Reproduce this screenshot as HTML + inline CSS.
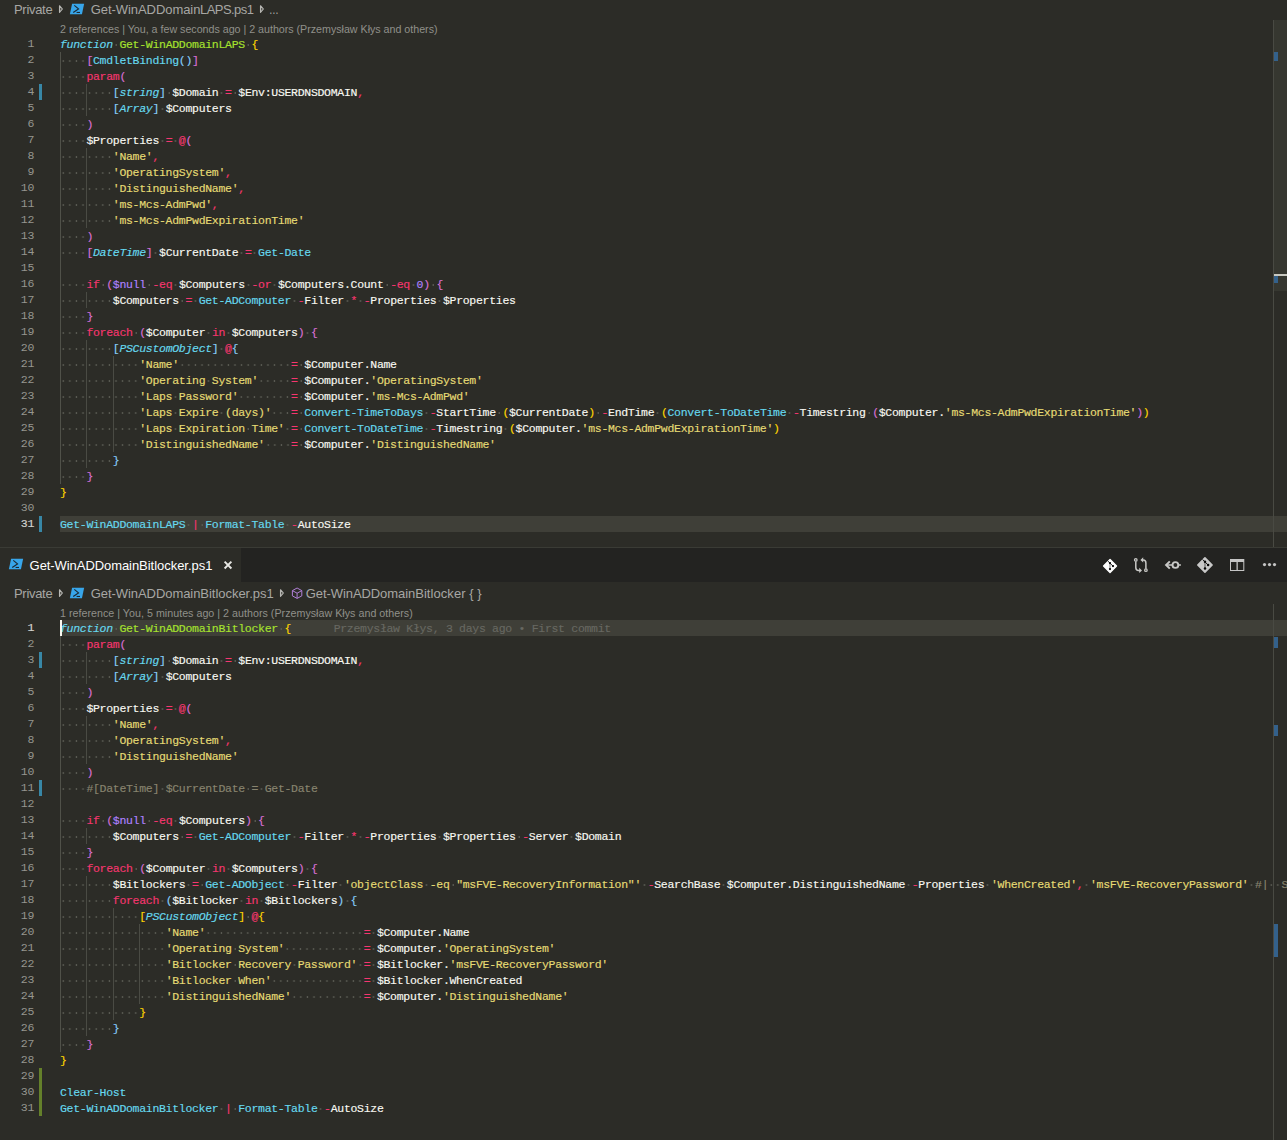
<!DOCTYPE html>
<html><head><meta charset="utf-8"><title>Get-WinADDomainBitlocker.ps1</title>
<style>
html,body{margin:0;padding:0;background:#2c2c27;}
body{width:1287px;height:1140px;position:relative;overflow:hidden;font-family:"Liberation Sans",sans-serif;color:#f8f8f2;}
.abs{position:absolute;}
.ed{position:absolute;left:0;width:1287px;overflow:hidden;font-family:"Liberation Mono",monospace;font-size:11.5px;letter-spacing:-0.3px;line-height:18px;}
.ln{position:relative;height:16px;white-space:pre;overflow:hidden;}
.no{position:absolute;left:0;top:0;width:34px;text-align:right;color:#96968f;line-height:16px;}
.cur .no{color:#d2d2ce;-webkit-text-stroke:0.2px;}
.tx{position:absolute;left:60px;top:0;height:16px;width:1300px;}
.tx span{-webkit-text-stroke:0.15px;}
.cur .tx{background:#3f3f38;}
.tx i{font-style:normal;display:inline-block;height:16px;vertical-align:top;background-image:radial-gradient(circle at 3.25px 9px,#595a52 0.5px,rgba(89,90,82,0) 1.2px);background-size:6.601px 16px;background-repeat:repeat-x;}
.gd{position:absolute;top:0;width:1px;height:16px;background:#4a4b44;}
.ga{background:#505149;}
u{position:absolute;left:39px;top:0;width:3px;height:16px;text-decoration:none;}
u.mod{background:#3887a6;}
u.add{background:#64802a;}
.k{color:#66d9ef;font-style:italic;}
.b{color:#66d9ef;}
.g{color:#a6e22e;}
.p{color:#f6366f;}
.s{color:#e6db74;}
.w{color:#f8f8f2;}
.n{color:#ae81ff;}
.c{color:#88846f;}

.y{color:#ffd700;}
.o{color:#da70d6;}
.l{color:#87cefa;}
.blame{color:#676861;margin-left:42.6px;}
.lens{position:absolute;left:60px;font-family:"Liberation Sans",sans-serif;font-size:10.7px;color:#90908a;white-space:pre;line-height:16px;height:16px;}
.bc{position:absolute;left:0;height:22px;line-height:24px;font-size:13px;color:#a7a7a4;white-space:pre;}
.bc span,.bc svg{position:absolute;}.bc span{top:0;}
.tabbar{position:absolute;left:0;top:548px;width:1287px;height:34px;background:#232321;}
.tab{position:absolute;left:0;top:0;width:241px;height:34px;background:#2c2c27;}
.sb{position:absolute;left:1273px;width:14px;border-left:1px solid #494a43;box-sizing:border-box;}
.ic{position:absolute;overflow:visible;}
</style></head>
<body>
<!-- top breadcrumbs -->
<div class="bc" style="top:-2px;width:1287px;">
<span style="left:14px;letter-spacing:-0.3px">Private</span>
<svg style="left:57px;top:6px" width="8" height="10" viewBox="0 0 8 10"><path d="M2.5 1.7 L5.4 5 L2.5 8.3 Z" fill="#55554f" stroke="#b8b8b4" stroke-width="1.1" stroke-linejoin="round"/></svg>
<svg style="left:69px;top:5px" width="16" height="12" viewBox="0 0 16 12"><path d="M3.1 0.75 H15.15 L12.95 11.25 H0.85 Z" fill="#38a6ea"/><path d="M5.3 2.4 L9.5 5.9 L4.2 9.6" fill="none" stroke="#1c2933" stroke-width="1.2"/><path d="M7.6 9.45 H11" stroke="#1c2933" stroke-width="1.1"/></svg>
<span style="left:90.8px;letter-spacing:-0.069px">Get-WinADDomain</span><span style="left:200.1px;letter-spacing:-0.57px">LAPS.ps1</span>
<svg style="left:258px;top:6px" width="8" height="10" viewBox="0 0 8 10"><path d="M2.5 1.7 L5.4 5 L2.5 8.3 Z" fill="#55554f" stroke="#b8b8b4" stroke-width="1.1" stroke-linejoin="round"/></svg>
<span style="left:269.2px;transform:scaleX(0.75);transform-origin:0 50%;color:#b4b4b0">…</span>
</div>
<div class="lens" style="top:21px;letter-spacing:-0.014px">2 references | You, a few seconds ago | 2 authors (Przemysław Kłys and others)</div>
<div class="ed" style="top:36px;height:511px;">
<div class="ln"><span class="no">1</span><div class="tx"><span class="k">function</span><i> </i><span class="g">Get-WinADDomainLAPS</span><i> </i><span class="y">{</span></div></div>
<div class="ln"><span class="no">2</span><div class="tx"><b class="gd ga" style="left:0px"></b><i>    </i><span class="o">[</span><span class="b">CmdletBinding</span><span class="l">()</span><span class="o">]</span></div></div>
<div class="ln"><span class="no">3</span><div class="tx"><b class="gd ga" style="left:0px"></b><i>    </i><span class="p">param</span><span class="o">(</span></div></div>
<div class="ln"><u class="mod"></u><span class="no">4</span><div class="tx"><b class="gd ga" style="left:0px"></b><b class="gd" style="left:26px"></b><i>        </i><span class="l">[</span><span class="k">string</span><span class="l">]</span><i> </i><span class="w">$Domain</span><i> </i><span class="p">=</span><i> </i><span class="w">$Env:USERDNSDOMAIN</span><span class="p">,</span></div></div>
<div class="ln"><span class="no">5</span><div class="tx"><b class="gd ga" style="left:0px"></b><b class="gd" style="left:26px"></b><i>        </i><span class="l">[</span><span class="k">Array</span><span class="l">]</span><i> </i><span class="w">$Computers</span></div></div>
<div class="ln"><span class="no">6</span><div class="tx"><b class="gd ga" style="left:0px"></b><i>    </i><span class="o">)</span></div></div>
<div class="ln"><span class="no">7</span><div class="tx"><b class="gd ga" style="left:0px"></b><i>    </i><span class="w">$Properties</span><i> </i><span class="p">=</span><i> </i><span class="p">@</span><span class="o">(</span></div></div>
<div class="ln"><span class="no">8</span><div class="tx"><b class="gd ga" style="left:0px"></b><b class="gd" style="left:26px"></b><i>        </i><span class="s">'Name'</span><span class="p">,</span></div></div>
<div class="ln"><span class="no">9</span><div class="tx"><b class="gd ga" style="left:0px"></b><b class="gd" style="left:26px"></b><i>        </i><span class="s">'OperatingSystem'</span><span class="p">,</span></div></div>
<div class="ln"><span class="no">10</span><div class="tx"><b class="gd ga" style="left:0px"></b><b class="gd" style="left:26px"></b><i>        </i><span class="s">'DistinguishedName'</span><span class="p">,</span></div></div>
<div class="ln"><span class="no">11</span><div class="tx"><b class="gd ga" style="left:0px"></b><b class="gd" style="left:26px"></b><i>        </i><span class="s">'ms-Mcs-AdmPwd'</span><span class="p">,</span></div></div>
<div class="ln"><span class="no">12</span><div class="tx"><b class="gd ga" style="left:0px"></b><b class="gd" style="left:26px"></b><i>        </i><span class="s">'ms-Mcs-AdmPwdExpirationTime'</span></div></div>
<div class="ln"><span class="no">13</span><div class="tx"><b class="gd ga" style="left:0px"></b><i>    </i><span class="o">)</span></div></div>
<div class="ln"><span class="no">14</span><div class="tx"><b class="gd ga" style="left:0px"></b><i>    </i><span class="o">[</span><span class="k">DateTime</span><span class="o">]</span><i> </i><span class="w">$CurrentDate</span><i> </i><span class="p">=</span><i> </i><span class="b">Get-Date</span></div></div>
<div class="ln"><span class="no">15</span><div class="tx"><b class="gd ga" style="left:0px"></b></div></div>
<div class="ln"><span class="no">16</span><div class="tx"><b class="gd ga" style="left:0px"></b><i>    </i><span class="p">if</span><i> </i><span class="o">(</span><span class="n">$null</span><i> </i><span class="p">-eq</span><i> </i><span class="w">$Computers</span><i> </i><span class="p">-or</span><i> </i><span class="w">$Computers.Count</span><i> </i><span class="p">-eq</span><i> </i><span class="n">0</span><span class="o">)</span><i> </i><span class="o">{</span></div></div>
<div class="ln"><span class="no">17</span><div class="tx"><b class="gd ga" style="left:0px"></b><b class="gd" style="left:26px"></b><i>        </i><span class="w">$Computers</span><i> </i><span class="p">=</span><i> </i><span class="b">Get-ADComputer</span><i> </i><span class="p">-</span><span class="w">Filter</span><i> </i><span class="p">*</span><i> </i><span class="p">-</span><span class="w">Properties</span><i> </i><span class="w">$Properties</span></div></div>
<div class="ln"><span class="no">18</span><div class="tx"><b class="gd ga" style="left:0px"></b><i>    </i><span class="o">}</span></div></div>
<div class="ln"><span class="no">19</span><div class="tx"><b class="gd ga" style="left:0px"></b><i>    </i><span class="p">foreach</span><i> </i><span class="o">(</span><span class="w">$Computer</span><i> </i><span class="p">in</span><i> </i><span class="w">$Computers</span><span class="o">)</span><i> </i><span class="o">{</span></div></div>
<div class="ln"><span class="no">20</span><div class="tx"><b class="gd ga" style="left:0px"></b><b class="gd" style="left:26px"></b><i>        </i><span class="l">[</span><span class="k">PSCustomObject</span><span class="l">]</span><i> </i><span class="p">@</span><span class="l">{</span></div></div>
<div class="ln"><span class="no">21</span><div class="tx"><b class="gd ga" style="left:0px"></b><b class="gd" style="left:26px"></b><b class="gd" style="left:53px"></b><i>            </i><span class="s">'Name'</span><i>                 </i><span class="p">=</span><i> </i><span class="w">$Computer.Name</span></div></div>
<div class="ln"><span class="no">22</span><div class="tx"><b class="gd ga" style="left:0px"></b><b class="gd" style="left:26px"></b><b class="gd" style="left:53px"></b><i>            </i><span class="s">'Operating</span><i> </i><span class="s">System'</span><i>     </i><span class="p">=</span><i> </i><span class="w">$Computer.</span><span class="s">'OperatingSystem'</span></div></div>
<div class="ln"><span class="no">23</span><div class="tx"><b class="gd ga" style="left:0px"></b><b class="gd" style="left:26px"></b><b class="gd" style="left:53px"></b><i>            </i><span class="s">'Laps</span><i> </i><span class="s">Password'</span><i>        </i><span class="p">=</span><i> </i><span class="w">$Computer.</span><span class="s">'ms-Mcs-AdmPwd'</span></div></div>
<div class="ln"><span class="no">24</span><div class="tx"><b class="gd ga" style="left:0px"></b><b class="gd" style="left:26px"></b><b class="gd" style="left:53px"></b><i>            </i><span class="s">'Laps</span><i> </i><span class="s">Expire</span><i> </i><span class="s">(days)'</span><i>   </i><span class="p">=</span><i> </i><span class="b">Convert-TimeToDays</span><i> </i><span class="p">-</span><span class="w">StartTime</span><i> </i><span class="y">(</span><span class="w">$CurrentDate</span><span class="y">)</span><i> </i><span class="p">-</span><span class="w">EndTime</span><i> </i><span class="y">(</span><span class="b">Convert-ToDateTime</span><i> </i><span class="p">-</span><span class="w">Timestring</span><i> </i><span class="o">(</span><span class="w">$Computer.</span><span class="s">'ms-Mcs-AdmPwdExpirationTime'</span><span class="o">)</span><span class="y">)</span></div></div>
<div class="ln"><span class="no">25</span><div class="tx"><b class="gd ga" style="left:0px"></b><b class="gd" style="left:26px"></b><b class="gd" style="left:53px"></b><i>            </i><span class="s">'Laps</span><i> </i><span class="s">Expiration</span><i> </i><span class="s">Time'</span><i> </i><span class="p">=</span><i> </i><span class="b">Convert-ToDateTime</span><i> </i><span class="p">-</span><span class="w">Timestring</span><i> </i><span class="y">(</span><span class="w">$Computer.</span><span class="s">'ms-Mcs-AdmPwdExpirationTime'</span><span class="y">)</span></div></div>
<div class="ln"><span class="no">26</span><div class="tx"><b class="gd ga" style="left:0px"></b><b class="gd" style="left:26px"></b><b class="gd" style="left:53px"></b><i>            </i><span class="s">'DistinguishedName'</span><i>    </i><span class="p">=</span><i> </i><span class="w">$Computer.</span><span class="s">'DistinguishedName'</span></div></div>
<div class="ln"><span class="no">27</span><div class="tx"><b class="gd ga" style="left:0px"></b><b class="gd" style="left:26px"></b><i>        </i><span class="l">}</span></div></div>
<div class="ln"><span class="no">28</span><div class="tx"><b class="gd ga" style="left:0px"></b><i>    </i><span class="o">}</span></div></div>
<div class="ln"><span class="no">29</span><div class="tx"><span class="y">}</span></div></div>
<div class="ln"><span class="no">30</span><div class="tx"></div></div>
<div class="ln cur"><u class="mod"></u><span class="no">31</span><div class="tx"><span class="b">Get-WinADDomainLAPS</span><i> </i><span class="p">|</span><i> </i><span class="b">Format-Table</span><i> </i><span class="p">-</span><span class="w">AutoSize</span></div></div>
</div>
<div class="sb" style="top:20px;height:527px;">
 <div class="abs" style="left:0;top:0;width:13px;height:271px;background:#363730;"></div>
 <div class="abs" style="left:0;top:32px;width:4px;height:9px;background:#34618b;"></div>
 <div class="abs" style="left:0;top:254px;width:4px;height:9px;background:#34618b;"></div>
 <div class="abs" style="left:0;top:254px;width:13px;height:2px;background:#c8c8c0;"></div>
</div>
<div class="abs" style="left:0;top:547px;width:1287px;height:1px;background:#3a3b35;"></div>
<!-- bottom group -->
<div class="tabbar">
 <div class="tab">
  <svg class="abs" style="left:8px;top:10px" width="16" height="12" viewBox="0 0 16 12"><path d="M3.1 0.75 H15.15 L12.95 11.25 H0.85 Z" fill="#38a6ea"/><path d="M5.3 2.4 L9.5 5.9 L4.2 9.6" fill="none" stroke="#1c2933" stroke-width="1.2"/><path d="M7.6 9.45 H11" stroke="#1c2933" stroke-width="1.1"/></svg>
  <span class="abs" style="left:29.6px;top:0;line-height:35px;font-size:13px;color:#ffffff;white-space:pre;letter-spacing:-0.069px">Get-WinADDomain</span><span class="abs" style="left:139.1px;top:0;line-height:35px;font-size:13px;color:#ffffff;white-space:pre;letter-spacing:-0.03px">Bitlocker.ps1</span>
  <svg class="abs" style="left:222px;top:11px" width="12" height="12" viewBox="0 0 12 12"><path d="M2.6 2.7 L9.4 9.5 M9.4 2.7 L2.6 9.5" stroke="#e8e8e4" stroke-width="1.9"/></svg>
 </div>
</div>

 <svg class="ic" style="left:1102px;top:558px" width="16" height="16" viewBox="0 0 16 16"><path d="M8.05 1.5 L14.5 7.95 L8.05 14.4 L1.6 7.95 Z" fill="#fff" stroke="#fff" stroke-width="1.4" stroke-linejoin="round"/><path d="M5.6 2.8 L11 8.1" stroke="#111" stroke-width="0.9" fill="none"/><path d="M8 5.1 V11.1" stroke="#777" stroke-width="1" fill="none"/><circle cx="11" cy="8.1" r="1.15" fill="#050505"/><circle cx="8" cy="11.1" r="1.15" fill="#050505"/><circle cx="8" cy="5.1" r="1.15" fill="#050505"/></svg>
 <svg class="ic" style="left:1133px;top:557px" width="16" height="16" viewBox="0 0 16 16"><g fill="none" stroke="#c8c8c6" stroke-width="1.5"><circle cx="2.8" cy="2.9" r="1.25" stroke-width="1.3"/><path d="M2.8 4.4 V10.4 Q2.8 13.4 5.6 13.4 H7"/><circle cx="12.9" cy="13.2" r="1.25" stroke-width="1.3"/><path d="M12.9 11.7 V5.9 Q12.9 2.9 10.2 2.9 H9.4"/></g><path d="M6.2 10.7 L9 13.4 L6.2 16.1 Z M10.2 0.2 L7.4 2.9 L10.2 5.6 Z" fill="#c8c8c6"/></svg>
 <svg class="ic" style="left:1165px;top:557px" width="16" height="16" viewBox="0 0 16 16"><g fill="none" stroke="#c8c8c6"><circle cx="10.4" cy="8" r="2.9" stroke-width="1.9"/><path d="M13.3 8 H15.9 M1 8 H7.5" stroke-width="1.6"/><path d="M4.8 4.4 L1.1 8 L4.8 11.6" stroke-width="2"/></g></svg>
 <svg class="ic" style="left:1197px;top:557px" width="16" height="16" viewBox="0 0 16 16"><path d="M7.95 0.8 L15.1 7.95 L7.95 15.1 L0.8 7.95 Z" fill="#c8c8c8" stroke="#c8c8c8" stroke-width="1.6" stroke-linejoin="round"/><path d="M5.6 2.5 L11.1 8" stroke="#111" stroke-width="1" fill="none"/><path d="M8 4.8 V11.4" stroke="#5e5e5e" stroke-width="1.1" fill="none"/><circle cx="11.1" cy="8" r="1.25" fill="#050505"/><circle cx="8" cy="11.4" r="1.25" fill="#050505"/><circle cx="8" cy="4.8" r="1.25" fill="#050505"/></svg>
 <svg class="ic" style="left:1229px;top:557px" width="16" height="16" viewBox="0 0 16 16"><path d="M1 2 H15.3 V14 H1 Z M2 5 V13 H7.5 V5 Z M8.8 5 V13 H14.3 V5 Z" fill="#c5c5c5" fill-rule="evenodd"/></svg>
 <svg class="ic" style="left:1261px;top:557px" width="16" height="16" viewBox="0 0 16 16"><circle cx="3.5" cy="7.6" r="1.6" fill="#c5c5c5"/><circle cx="8.5" cy="7.6" r="1.6" fill="#c5c5c5"/><circle cx="13.5" cy="7.6" r="1.6" fill="#c5c5c5"/></svg>
<div class="bc" style="top:582px;width:1287px;">
<span style="left:14px;letter-spacing:-0.3px">Private</span>
<svg style="left:57px;top:6px" width="8" height="10" viewBox="0 0 8 10"><path d="M2.5 1.7 L5.4 5 L2.5 8.3 Z" fill="#55554f" stroke="#b8b8b4" stroke-width="1.1" stroke-linejoin="round"/></svg>
<svg style="left:69px;top:5px" width="16" height="12" viewBox="0 0 16 12"><path d="M3.1 0.75 H15.15 L12.95 11.25 H0.85 Z" fill="#38a6ea"/><path d="M5.3 2.4 L9.5 5.9 L4.2 9.6" fill="none" stroke="#1c2933" stroke-width="1.2"/><path d="M7.6 9.45 H11" stroke="#1c2933" stroke-width="1.1"/></svg>
<span style="left:90.8px;letter-spacing:-0.069px">Get-WinADDomain</span><span style="left:200.3px;letter-spacing:-0.03px">Bitlocker.ps1</span>
<svg style="left:278px;top:6px" width="8" height="10" viewBox="0 0 8 10"><path d="M2.5 1.7 L5.4 5 L2.5 8.3 Z" fill="#55554f" stroke="#b8b8b4" stroke-width="1.1" stroke-linejoin="round"/></svg>
<svg style="left:290px;top:4px" width="16" height="16" viewBox="0 0 16 16"><path d="M7.1 2 L11.8 4.6 V9.9 L7.1 12.4 L2.4 9.9 V4.6 Z M2.4 4.6 L7.1 7.2 L11.8 4.6 M7.1 7.2 V12.4" fill="none" stroke="#b180d7" stroke-width="1" stroke-linejoin="round"/></svg>
<span style="left:305.7px;letter-spacing:-0.069px">Get-WinADDomain</span><span style="left:415.2px;letter-spacing:0.06px">Bitlocker { }</span>
</div>
<div class="lens" style="top:605px;letter-spacing:0.02px">1 reference | You, 5 minutes ago | 2 authors (Przemysław Kłys and others)</div>
<div class="ed" style="top:620px;height:520px;">
<div class="ln cur"><span class="no">1</span><div class="tx"><span class="k">function</span><i> </i><span class="g">Get-WinADDomainBitlocker</span><i> </i><span class="y">{</span><span class="blame">Przemysław Kłys, 3 days ago • First commit</span></div></div>
<div class="ln"><span class="no">2</span><div class="tx"><b class="gd ga" style="left:0px"></b><i>    </i><span class="p">param</span><span class="o">(</span></div></div>
<div class="ln"><u class="mod"></u><span class="no">3</span><div class="tx"><b class="gd ga" style="left:0px"></b><b class="gd" style="left:26px"></b><i>        </i><span class="l">[</span><span class="k">string</span><span class="l">]</span><i> </i><span class="w">$Domain</span><i> </i><span class="p">=</span><i> </i><span class="w">$Env:USERDNSDOMAIN</span><span class="p">,</span></div></div>
<div class="ln"><span class="no">4</span><div class="tx"><b class="gd ga" style="left:0px"></b><b class="gd" style="left:26px"></b><i>        </i><span class="l">[</span><span class="k">Array</span><span class="l">]</span><i> </i><span class="w">$Computers</span></div></div>
<div class="ln"><span class="no">5</span><div class="tx"><b class="gd ga" style="left:0px"></b><i>    </i><span class="o">)</span></div></div>
<div class="ln"><span class="no">6</span><div class="tx"><b class="gd ga" style="left:0px"></b><i>    </i><span class="w">$Properties</span><i> </i><span class="p">=</span><i> </i><span class="p">@</span><span class="o">(</span></div></div>
<div class="ln"><span class="no">7</span><div class="tx"><b class="gd ga" style="left:0px"></b><b class="gd" style="left:26px"></b><i>        </i><span class="s">'Name'</span><span class="p">,</span></div></div>
<div class="ln"><span class="no">8</span><div class="tx"><b class="gd ga" style="left:0px"></b><b class="gd" style="left:26px"></b><i>        </i><span class="s">'OperatingSystem'</span><span class="p">,</span></div></div>
<div class="ln"><span class="no">9</span><div class="tx"><b class="gd ga" style="left:0px"></b><b class="gd" style="left:26px"></b><i>        </i><span class="s">'DistinguishedName'</span></div></div>
<div class="ln"><span class="no">10</span><div class="tx"><b class="gd ga" style="left:0px"></b><i>    </i><span class="o">)</span></div></div>
<div class="ln"><u class="mod"></u><span class="no">11</span><div class="tx"><b class="gd ga" style="left:0px"></b><i>    </i><span class="c">#[DateTime]</span><i> </i><span class="c">$CurrentDate</span><i> </i><span class="c">=</span><i> </i><span class="c">Get-Date</span></div></div>
<div class="ln"><span class="no">12</span><div class="tx"><b class="gd ga" style="left:0px"></b></div></div>
<div class="ln"><span class="no">13</span><div class="tx"><b class="gd ga" style="left:0px"></b><i>    </i><span class="p">if</span><i> </i><span class="o">(</span><span class="n">$null</span><i> </i><span class="p">-eq</span><i> </i><span class="w">$Computers</span><span class="o">)</span><i> </i><span class="o">{</span></div></div>
<div class="ln"><span class="no">14</span><div class="tx"><b class="gd ga" style="left:0px"></b><b class="gd" style="left:26px"></b><i>        </i><span class="w">$Computers</span><i> </i><span class="p">=</span><i> </i><span class="b">Get-ADComputer</span><i> </i><span class="p">-</span><span class="w">Filter</span><i> </i><span class="p">*</span><i> </i><span class="p">-</span><span class="w">Properties</span><i> </i><span class="w">$Properties</span><i> </i><span class="p">-</span><span class="w">Server</span><i> </i><span class="w">$Domain</span></div></div>
<div class="ln"><span class="no">15</span><div class="tx"><b class="gd ga" style="left:0px"></b><i>    </i><span class="o">}</span></div></div>
<div class="ln"><span class="no">16</span><div class="tx"><b class="gd ga" style="left:0px"></b><i>    </i><span class="p">foreach</span><i> </i><span class="o">(</span><span class="w">$Computer</span><i> </i><span class="p">in</span><i> </i><span class="w">$Computers</span><span class="o">)</span><i> </i><span class="o">{</span></div></div>
<div class="ln"><span class="no">17</span><div class="tx"><b class="gd ga" style="left:0px"></b><b class="gd" style="left:26px"></b><i>        </i><span class="w">$Bitlockers</span><i> </i><span class="p">=</span><i> </i><span class="b">Get-ADObject</span><i> </i><span class="p">-</span><span class="w">Filter</span><i> </i><span class="s">'objectClass</span><i> </i><span class="s">-eq</span><i> </i><span class="s">"msFVE-RecoveryInformation"'</span><i> </i><span class="p">-</span><span class="w">SearchBase</span><i> </i><span class="w">$Computer.DistinguishedName</span><i> </i><span class="p">-</span><span class="w">Properties</span><i> </i><span class="s">'WhenCreated'</span><span class="p">,</span><i> </i><span class="s">'msFVE-RecoveryPassword'</span><i> </i><span class="c">#|</span><i>  </i><span class="c">Select-Object</span></div></div>
<div class="ln"><span class="no">18</span><div class="tx"><b class="gd ga" style="left:0px"></b><b class="gd" style="left:26px"></b><i>        </i><span class="p">foreach</span><i> </i><span class="l">(</span><span class="w">$Bitlocker</span><i> </i><span class="p">in</span><i> </i><span class="w">$Bitlockers</span><span class="l">)</span><i> </i><span class="l">{</span></div></div>
<div class="ln"><span class="no">19</span><div class="tx"><b class="gd ga" style="left:0px"></b><b class="gd" style="left:26px"></b><b class="gd" style="left:53px"></b><i>            </i><span class="y">[</span><span class="k">PSCustomObject</span><span class="y">]</span><i> </i><span class="p">@</span><span class="y">{</span></div></div>
<div class="ln"><span class="no">20</span><div class="tx"><b class="gd ga" style="left:0px"></b><b class="gd" style="left:26px"></b><b class="gd" style="left:53px"></b><b class="gd" style="left:79px"></b><i>                </i><span class="s">'Name'</span><i>                        </i><span class="p">=</span><i> </i><span class="w">$Computer.Name</span></div></div>
<div class="ln"><span class="no">21</span><div class="tx"><b class="gd ga" style="left:0px"></b><b class="gd" style="left:26px"></b><b class="gd" style="left:53px"></b><b class="gd" style="left:79px"></b><i>                </i><span class="s">'Operating</span><i> </i><span class="s">System'</span><i>            </i><span class="p">=</span><i> </i><span class="w">$Computer.</span><span class="s">'OperatingSystem'</span></div></div>
<div class="ln"><span class="no">22</span><div class="tx"><b class="gd ga" style="left:0px"></b><b class="gd" style="left:26px"></b><b class="gd" style="left:53px"></b><b class="gd" style="left:79px"></b><i>                </i><span class="s">'Bitlocker</span><i> </i><span class="s">Recovery</span><i> </i><span class="s">Password'</span><i> </i><span class="p">=</span><i> </i><span class="w">$Bitlocker.</span><span class="s">'msFVE-RecoveryPassword'</span></div></div>
<div class="ln"><span class="no">23</span><div class="tx"><b class="gd ga" style="left:0px"></b><b class="gd" style="left:26px"></b><b class="gd" style="left:53px"></b><b class="gd" style="left:79px"></b><i>                </i><span class="s">'Bitlocker</span><i> </i><span class="s">When'</span><i>              </i><span class="p">=</span><i> </i><span class="w">$Bitlocker.WhenCreated</span></div></div>
<div class="ln"><span class="no">24</span><div class="tx"><b class="gd ga" style="left:0px"></b><b class="gd" style="left:26px"></b><b class="gd" style="left:53px"></b><b class="gd" style="left:79px"></b><i>                </i><span class="s">'DistinguishedName'</span><i>           </i><span class="p">=</span><i> </i><span class="w">$Computer.</span><span class="s">'DistinguishedName'</span></div></div>
<div class="ln"><span class="no">25</span><div class="tx"><b class="gd ga" style="left:0px"></b><b class="gd" style="left:26px"></b><b class="gd" style="left:53px"></b><i>            </i><span class="y">}</span></div></div>
<div class="ln"><span class="no">26</span><div class="tx"><b class="gd ga" style="left:0px"></b><b class="gd" style="left:26px"></b><i>        </i><span class="l">}</span></div></div>
<div class="ln"><span class="no">27</span><div class="tx"><b class="gd ga" style="left:0px"></b><i>    </i><span class="o">}</span></div></div>
<div class="ln"><span class="no">28</span><div class="tx"><span class="y">}</span></div></div>
<div class="ln"><u class="add"></u><span class="no">29</span><div class="tx"></div></div>
<div class="ln"><u class="add"></u><span class="no">30</span><div class="tx"><span class="b">Clear-Host</span></div></div>
<div class="ln"><u class="add"></u><span class="no">31</span><div class="tx"><span class="b">Get-WinADDomainBitlocker</span><i> </i><span class="p">|</span><i> </i><span class="b">Format-Table</span><i> </i><span class="p">-</span><span class="w">AutoSize</span></div></div>
<div class="abs" style="left:60px;top:0;width:2px;height:16px;background:#f8f8f0;"></div>
</div>
<div class="sb" style="top:604px;height:536px;">
 <div class="abs" style="left:0;top:33px;width:4px;height:11px;background:#34618b;"></div>
 <div class="abs" style="left:0;top:121px;width:4px;height:11px;background:#34618b;"></div>
 <div class="abs" style="left:0;top:320px;width:4px;height:33px;background:#34618b;"></div>
</div>
</body></html>
